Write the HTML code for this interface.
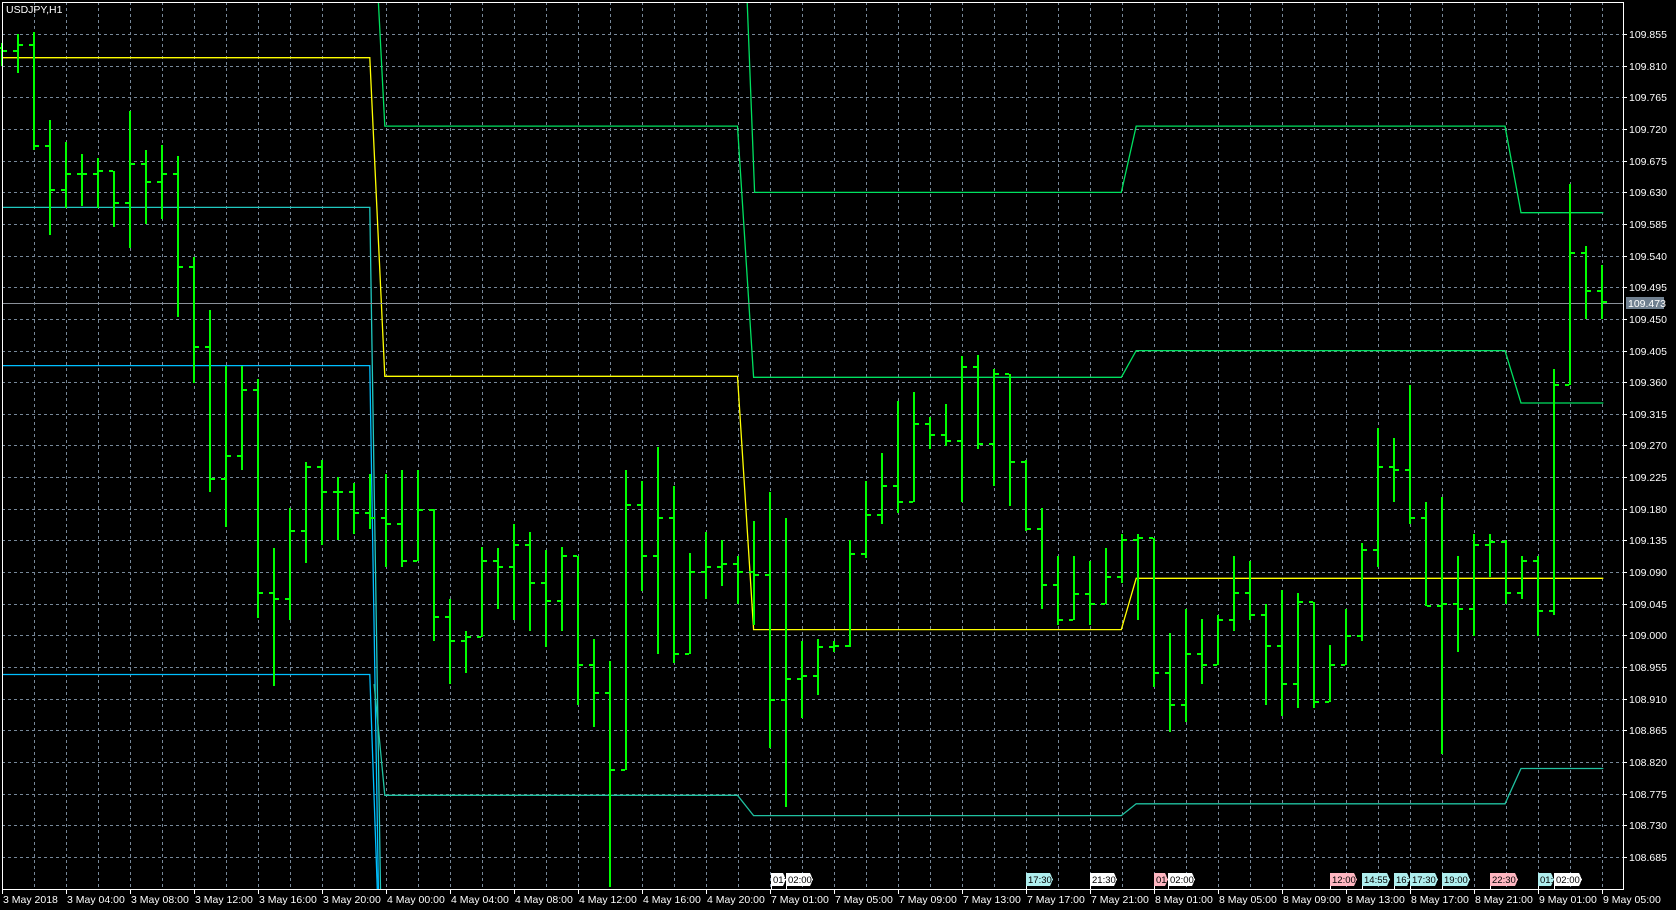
<!DOCTYPE html>
<html><head><meta charset="utf-8"><style>
html,body{margin:0;padding:0;background:#000;width:1676px;height:910px;overflow:hidden}
svg{display:block}
text{font-family:"Liberation Sans",sans-serif;font-size:10.5px;fill:#fff}
text.m{font-size:9.5px;fill:#000}
</style></head><body>
<svg id="s" width="1676" height="910" xmlns="http://www.w3.org/2000/svg" shape-rendering="crispEdges">
<rect width="1676" height="910" fill="#000"/>
<g id="grid"></g><g id="lines"></g><g id="bars"></g><g id="axis"></g>
<text x="6" y="13">USDJPY,H1</text>
</svg>
<script>
var NS="http://www.w3.org/2000/svg",K=1.0689;
function el(p,t,a,txt){var e=document.createElementNS(NS,t);for(var k in a)e.setAttribute(k,a[k]);if(txt!=null)e.textContent=txt;document.getElementById(p).appendChild(e);return e;}
var L=2,T=2,R=1623,B=889;
for(var x=34;x<R;x+=32)el("grid","line",{x1:x+.5,y1:T,x2:x+.5,y2:B,stroke:"#778899","stroke-dasharray":"3,3"});
for(var k=0;k<27;k++){var y=Math.round(34+31.65*k);
el("grid","line",{x1:L,y1:y+.5,x2:R,y2:y+.5,stroke:"#778899","stroke-dasharray":"3,3"});
el("axis","line",{x1:R,y1:y+.5,x2:R+4,y2:y+.5,stroke:"#fff"});
el("axis","text",{x:R+6,y:y+4},(109.855-0.045*k).toFixed(3));}
el("axis","rect",{x:L+.5,y:T+.5,width:R-L,height:B-T,fill:"none",stroke:"#fff"});
var tl=["3 May 2018","3 May 04:00","3 May 08:00","3 May 12:00","3 May 16:00","3 May 20:00","4 May 00:00","4 May 04:00","4 May 08:00","4 May 12:00","4 May 16:00","4 May 20:00","7 May 01:00","7 May 05:00","7 May 09:00","7 May 13:00","7 May 17:00","7 May 21:00","8 May 01:00","8 May 05:00","8 May 09:00","8 May 13:00","8 May 17:00","8 May 21:00","9 May 01:00","9 May 05:00"];
tl.forEach(function(t,i){var x=2+64*i;el("axis","line",{x1:x+.5,y1:B,x2:x+.5,y2:B+5,stroke:"#fff"});el("axis","text",{x:x+1,y:903},t);});
function pl(pts,c){el("lines","polyline",{points:pts.map(function(p){return (p[0]*K).toFixed(1)+","+(p[1]*K).toFixed(1)}).join(" "),fill:"none",stroke:c,"stroke-width":1.3,"shape-rendering":"auto"});}
pl([[2,54],[346,54],[360,352],[690,352],[705,589],[1049,589],[1063,541],[1500,541]],"#ffff00");
pl([[2,194],[346,194],[356,832]],"#20c8c0");
pl([[2,342],[346,342],[354,832]],"#00bfff");
pl([[2,631],[346,631],[353,832]],"#00bfff");
pl([[350,640],[360,744],[690,744],[705,763],[1049,763],[1063,752],[1408,752],[1423,719],[1500,719]],"#20c0a0");
pl([[354,2],[360,118],[690,118],[705,353],[1049,353],[1063,328],[1408,328],[1423,377],[1500,377]],"#00e060");
pl([[699,2],[706,180],[1049,180],[1063,118],[1408,118],[1423,199],[1500,199]],"#00e060");
el("lines","line",{x1:L,y1:303.5,x2:R,y2:303.5,stroke:"#8a9099"});
el("axis","rect",{x:R+3,y:297,width:38,height:12,fill:"#708090"});
el("axis","text",{x:R+5,y:307},"109.473");
var d=[[40,62,48],[32,68,42],[30,140,137],[112,220,178],[133,195,163],[144,193,163],[148,195,160],[160,212,190],[104,232,153],[140,210,170],[136,205,163],[146,297,250],[240,358,325],[290,460,448],[342,493,427],[342,440,365],[355,578,555],[513,642,560],[475,580,497],[432,527,437],[430,510,460],[446,505,460],[452,500,480],[443,495,485],[443,530,490],[440,530,525],[440,510,477],[476,600,577],[560,640,600],[590,630,596],[512,568,525],[513,570,530],[490,580,510],[498,590,545],[515,605,562],[512,590,520],[592,660,622],[598,680,648],[618,830,720],[440,680,472],[450,553,520],[418,612,485],[455,620,612],[517,610,535],[498,560,530],[505,548,528],[520,565,535],[487,585,538],[460,700,655],[485,755,635],[600,672,632],[598,650,605],[600,610,604],[505,605,518],[450,522,482],[424,490,455],[375,480,470],[367,455,397],[390,420,407],[378,417,413],[333,470,343],[332,420,415],[345,455,350],[428,473,432],[430,497,495],[475,570,547],[520,585,580],[520,575,556],[525,585,565],[513,555,540],[500,545,505],[500,580,503],[552,643,630],[592,685,660],[570,675,612],[579,640,622],[575,620,580],[520,590,555],[525,580,575],[565,660,604],[552,670,640],[555,662,563],[570,662,657],[603,645,622],[570,620,595],[508,600,515],[400,530,437],[410,470,440],[360,490,485],[470,565,567],[465,705,565],[520,610,570],[500,595,510],[500,540,507],[505,565,555],[520,560,525],[520,595,572],[345,575,360],[172,360,237],[230,298,272],[248,298,283]];
var prev=45;
d.forEach(function(b,i){var x=2+16*i,h=Math.round(b[0]*K),l=Math.round(b[1]*K),c=Math.round(b[2]*K),o=Math.round(prev*K);prev=b[2];
var hh=Math.min(h,o,c),ll=Math.max(l,o,c);hh=Math.max(hh,T+1);ll=Math.min(ll,B-1);
el("bars","rect",{x:x-1,y:hh,width:2,height:ll-hh,fill:"#00ff00"});
el("bars","rect",{x:x-5,y:o-1,width:4,height:2,fill:"#00ff00"});
el("bars","rect",{x:x+1,y:c-1,width:4,height:2,fill:"#00ff00"});});
var m=[[771,15,"01:","#fff"],[786,27,"02:00","#fff"],[1026,27,"17:30","#afeeee"],[1090,27,"21:30","#fff"],[1154,14,"01:","#ffb6c1"],[1168,27,"02:00","#fff"],[1330,27,"12:00","#ffb6c1"],[1362,28,"14:55","#afeeee"],[1394,16,"16:","#afeeee"],[1410,28,"17:30","#afeeee"],[1442,28,"19:00","#afeeee"],[1490,28,"22:30","#ffb6c1"],[1538,16,"01:","#afeeee"],[1554,28,"02:00","#fff"]];
m.forEach(function(a){var x=a[0],w=a[1],y=873;
el("axis","line",{x1:x+.5,y1:y,x2:x+.5,y2:B,stroke:"#fff"});
el("axis","polygon",{points:x+","+y+" "+(x+w-3)+","+y+" "+(x+w)+","+(y+6.5)+" "+(x+w-3)+","+(y+13)+" "+x+","+(y+13),fill:a[3]});
el("axis","text",{x:x+2,y:y+10,"class":"m"},a[2]);});
</script>
</body></html>
